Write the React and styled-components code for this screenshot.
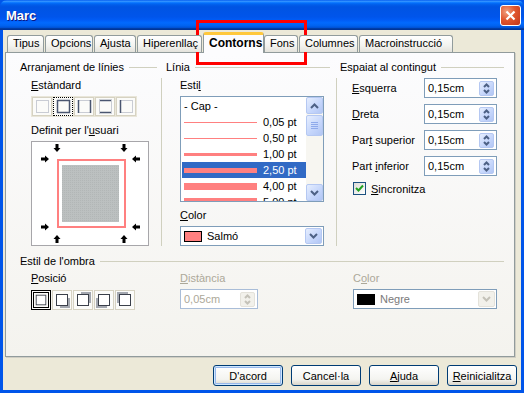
import React from "react";
import styled, { createGlobalStyle } from "styled-components";

const GlobalStyle = createGlobalStyle`
  body {
    margin: 0;
    font-family: "Liberation Sans", Arial, sans-serif;
    font-size: 11px;
    color: #000;
  }
`;

const tabs = [
  { name: "Tipus", w: 37 },
  { name: "Opcions", w: 48 },
  { name: "Ajusta", w: 42 },
  { name: "Hiperenllaç", w: 65 },
  { name: "Contorns", w: 61, active: true },
  { name: "Fons", w: 34 },
  { name: "Columnes", w: 59 },
  { name: "Macroinstrucció", w: 94 },
];

const styles = [
  { text: "- Cap -" },
  { text: "0,05 pt", h: 1 },
  { text: "0,50 pt", h: 1 },
  { text: "1,00 pt", h: 3 },
  { text: "2,50 pt", h: 5, selected: true },
  { text: "4,00 pt", h: 7 },
  { text: "5,00 pt", h: 8 },
];

const presets = [
  { l: 0, r: 0, t: 0, b: 0 },
  { l: 1, r: 1, t: 1, b: 1, focus: true },
  { l: 1, r: 1, t: 0, b: 0 },
  { l: 0, r: 0, t: 1, b: 1 },
  { l: 1, r: 0, t: 0, b: 0 },
];

const shadows = [null, [3, 3], [3, -3], [-3, 3], [-3, -3]];

const spacing = [
  { pre: "", u: "E", post: "squerra" },
  { pre: "", u: "D", post: "reta" },
  { pre: "Par", u: "t", post: " superior" },
  { pre: "Part ", u: "i", post: "nferior" },
];

export default function App() {
  return (
    <>
      <GlobalStyle />
      <Window>
        <TitleBar>
          <Title>Marc</Title>
          <CloseButton>
            <svg width="11" height="11" viewBox="0 0 11 11">
              <path d="M1.5 1.5 L9.5 9.5 M9.5 1.5 L1.5 9.5" stroke="#fff" strokeWidth="2.2" />
            </svg>
          </CloseButton>
        </TitleBar>
        <Body>
          <TabRow>
            {tabs.map((t) => (
              <Tab key={t.name} $w={t.w} $active={t.active}>
                {t.name}
              </Tab>
            ))}
          </TabRow>
          <Panel>
            <TopArea>
              <Group $w={137}>
                <GroupHead>
                  Arranjament de línies<HeadLine />
                </GroupHead>
                <GroupBody $indent={11}>
                  <Label $top={5}>
                    <u>E</u>stàndard
                  </Label>
                  <ValueSet>
                    {presets.map((p, i) => (
                      <PresetItem key={i} $focus={p.focus}>
                        <PresetIcon {...p} />
                      </PresetItem>
                    ))}
                  </ValueSet>
                  <Label $top={7}>
                    Definit per l'<u>u</u>suari
                  </Label>
                  <UserBox>
                    <UserPreview />
                  </UserBox>
                </GroupBody>
              </Group>
              <Separator $left={4} $right={4} />
              <Group $w={164}>
                <GroupHead>
                  Línia<HeadLine />
                </GroupHead>
                <GroupBody $indent={14}>
                  <Label $top={5}>
                    Esti<u>l</u>
                  </Label>
                  <ListBox>
                    <ListItems>
                      {styles.map((s) => (
                        <ListRow key={s.text} $selected={s.selected}>
                          {s.h ? (
                            <>
                              <LineCell>
                                <Stroke $h={s.h} />
                              </LineCell>
                              {s.text}
                            </>
                          ) : (
                            s.text
                          )}
                        </ListRow>
                      ))}
                    </ListItems>
                    <Scrollbar>
                      <ScrollButton>
                        <Chevron dir="up" />
                      </ScrollButton>
                      <Thumb>
                        <Grip />
                        <Grip />
                        <Grip />
                        <Grip />
                      </Thumb>
                      <ScrollSpace />
                      <ScrollButton>
                        <Chevron dir="down" />
                      </ScrollButton>
                    </Scrollbar>
                  </ListBox>
                  <Label $top={7}>
                    <u>C</u>olor
                  </Label>
                  <Dropdown $w={144} $top={4}>
                    <Swatch $color="#FF8080" />
                    <DropText>Salmó</DropText>
                    <DropButton>
                      <Chevron dir="down" />
                    </DropButton>
                  </Dropdown>
                </GroupBody>
              </Group>
              <Separator $left={6} $right={3} />
              <Group $w={164}>
                <GroupHead>
                  Espaiat al contingut<HeadLine />
                </GroupHead>
                <GroupBody $indent={12}>
                  <SpacingList>
                    {spacing.map((s) => (
                      <SpacingRow key={s.post}>
                        <RowLabel>
                          {s.pre}
                          <u>{s.u}</u>
                          {s.post}
                        </RowLabel>
                        <SpinField $w={73}>
                          <FieldText>0,15cm</FieldText>
                          <SpinButton>
                            <Chevron dir="up" small />
                            <Chevron dir="down" small />
                          </SpinButton>
                        </SpinField>
                      </SpacingRow>
                    ))}
                  </SpacingList>
                  <CheckRow>
                    <CheckBox>
                      <svg width="11" height="11" viewBox="0 0 11 11">
                        <path d="M2 5 L4.5 7.5 L9 2.5" fill="none" stroke="#21A121" strokeWidth="2" />
                      </svg>
                    </CheckBox>
                    <span>
                      <u>S</u>incronitza
                    </span>
                  </CheckRow>
                </GroupBody>
              </Group>
            </TopArea>

            <ShadowSection>
              <GroupHead>
                Estil de l'ombra<HeadLine />
              </GroupHead>
              <ShadowGrid>
                <div>
                  <Label $top={4}>
                    <u>P</u>osició
                  </Label>
                  <ShadowSet>
                    {shadows.map((off, i) => (
                      <ShadowItem key={i} $selected={i === 0}>
                        <ShadowIcon off={off} />
                      </ShadowItem>
                    ))}
                  </ShadowSet>
                </div>
                <div>
                  <Label $top={4} $disabled>
                    <u>D</u>istància
                  </Label>
                  <SpinField $w={78} $top={4} $disabled>
                    <FieldText $disabled>0,05cm</FieldText>
                    <SpinButton $disabled>
                      <Chevron dir="up" small color="#C4C2B8" />
                      <Chevron dir="down" small color="#C4C2B8" />
                    </SpinButton>
                  </SpinField>
                </div>
                <div>
                  <Label $top={4} $disabled>
                    C<u>o</u>lor
                  </Label>
                  <Dropdown $w={144} $top={4}>
                    <Swatch $color="#000" $w={18} />
                    <DropText $disabled>Negre</DropText>
                    <DropButton $disabled>
                      <Chevron dir="down" color="#C4C2B8" />
                    </DropButton>
                  </Dropdown>
                </div>
              </ShadowGrid>
            </ShadowSection>
          </Panel>
          <ButtonRow>
            <Button $default>D'acord</Button>
            <Button>Cancel·la</Button>
            <Button>
              <u>A</u>juda
            </Button>
            <Button>
              <u>R</u>einicialitza
            </Button>
          </ButtonRow>
        </Body>
        <Highlight />
      </Window>
    </>
  );
}

function Chevron({ dir, small, color = "#4D6185" }) {
  const w = small ? 7 : 9;
  const h = small ? 5 : 6;
  const pts =
    dir === "down"
      ? `1,1 ${w / 2},${h - 1.5} ${w - 1},1`
      : `1,${h - 1} ${w / 2},1.5 ${w - 1},${h - 1}`;
  return (
    <svg width={w} height={h} viewBox={`0 0 ${w} ${h}`}>
      <polyline points={pts} fill="none" stroke={color} strokeWidth="2" />
    </svg>
  );
}

function PresetIcon({ l, r, t, b }) {
  const dark = "#4A5670";
  const light = "#C9CCD4";
  return (
    <svg width="17" height="17" viewBox="0 0 17 17">
      <line x1="2" y1="2.5" x2="15" y2="2.5" stroke={t ? dark : light} strokeWidth={t ? 1.5 : 1} />
      <line x1="2" y1="14.5" x2="15" y2="14.5" stroke={b ? dark : light} strokeWidth={b ? 1.5 : 1} />
      <line x1="2.5" y1="2" x2="2.5" y2="15" stroke={l ? dark : light} strokeWidth={l ? 1.5 : 1} />
      <line x1="14.5" y1="2" x2="14.5" y2="15" stroke={r ? dark : light} strokeWidth={r ? 1.5 : 1} />
    </svg>
  );
}

function ShadowIcon({ off }) {
  return (
    <svg width="16" height="16" viewBox="0 0 16 16">
      {off && <rect x={3 + off[0]} y={3 + off[1]} width="11" height="11" fill="#A4A8B0" />}
      <rect x="2.5" y="2.5" width="11" height="11" fill="#fff" stroke="#3A3F4A" />
    </svg>
  );
}

function Arrow({ x, y, rot }) {
  return (
    <polygon
      points="-1.5,-4 1.5,-4 1.5,0 3.5,0 0,4 -3.5,0 -1.5,0"
      fill="#000"
      transform={`translate(${x} ${y}) rotate(${rot})`}
    />
  );
}

function UserPreview() {
  return (
    <svg width="116" height="103" viewBox="0 0 116 103">
      <defs>
        <pattern id="hatch" width="2" height="2" patternUnits="userSpaceOnUse">
          <rect width="2" height="2" fill="#BCC0C0" />
          <rect width="1" height="1" fill="#B2B6B6" />
        </pattern>
      </defs>
      <Arrow x={25} y={6} rot={0} />
      <Arrow x={92} y={6} rot={0} />
      <Arrow x={13} y={17} rot={-90} />
      <Arrow x={104} y={17} rot={90} />
      <Arrow x={13} y={85} rot={-90} />
      <Arrow x={104} y={85} rot={90} />
      <Arrow x={25} y={97} rot={180} />
      <Arrow x={92} y={97} rot={180} />
      <rect x="26" y="18" width="67" height="67" fill="#fff" stroke="#FF8080" strokeWidth="2" />
      <rect x="30" y="23" width="57" height="57" fill="url(#hatch)" />
    </svg>
  );
}

const Window = styled.div`
  position: relative;
  width: 524px;
  height: 393px;
  display: flex;
  flex-direction: column;
  overflow: hidden;
  background: #0055ea;
`;

const TitleBar = styled.div`
  height: 30px;
  flex-shrink: 0;
  box-sizing: border-box;
  padding: 0 3px 0 6px;
  display: flex;
  align-items: center;
  justify-content: space-between;
  border-radius: 7px 7px 0 0;
  background: linear-gradient(
    to bottom,
    #0058ee 0%,
    #3593ff 4%,
    #288eff 6%,
    #127dff 8%,
    #036ffc 10%,
    #0262ee 14%,
    #0057e5 20%,
    #0054e3 24%,
    #0055eb 56%,
    #005bf5 66%,
    #026afe 76%,
    #0062ef 86%,
    #0052d6 92%,
    #0040ab 94%,
    #003092 100%
  );
`;

const Title = styled.div`
  color: #fff;
  font-weight: bold;
  font-size: 13px;
  text-shadow: 1px 1px 0 #0a1883;
`;

const CloseButton = styled.div`
  width: 21px;
  height: 21px;
  box-sizing: border-box;
  border: 1px solid #fff;
  border-radius: 3px;
  display: flex;
  align-items: center;
  justify-content: center;
  background: radial-gradient(circle at 30% 30%, #f0a080, #e0562e 45%, #c2351a);
`;

const Body = styled.div`
  flex: 1;
  display: flex;
  flex-direction: column;
  background: #ece9d8;
  border: 3px solid #0055ea;
  border-top: none;
  padding: 2px 4px 0 2px;
`;

const TabRow = styled.div`
  display: flex;
  align-items: flex-end;
  gap: 1px;
  height: 21px;
  padding-left: 2px;
  margin-bottom: -1px;
  position: relative;
  z-index: 1;
`;

const Tab = styled.div`
  width: ${(p) => p.$w}px;
  height: ${(p) => (p.$active ? 21 : 17)}px;
  margin-bottom: ${(p) => (p.$active ? 0 : 1)}px;
  margin-right: ${(p) => (p.$active ? -1 : 0)}px;
  box-sizing: border-box;
  border: 1px solid #919b9c;
  border-bottom: none;
  border-top: ${(p) => (p.$active ? "3px solid #ffc83c" : "1px solid #919b9c")};
  border-radius: 3px 3px 0 0;
  background: ${(p) =>
    p.$active ? "#fcfcfe" : "linear-gradient(#ffffff, #f3f3ef 60%, #e4e3dc)"};
  font-weight: ${(p) => (p.$active ? "bold" : "normal")};
  font-size: ${(p) => (p.$active ? "12px" : "11px")};
  line-height: ${(p) => (p.$active ? 16 : 15)}px;
  padding-left: 5px;
  white-space: nowrap;
  overflow: hidden;
`;

const Panel = styled.div`
  width: 510px;
  height: 305px;
  box-sizing: border-box;
  border: 1px solid #919b9c;
  box-shadow: 1px 1px 0 #d0cec4;
  background: linear-gradient(#fcfcfe, #f4f3ee);
  padding: 8px 10px 0 14px;
`;

const TopArea = styled.div`
  display: flex;
`;

const Group = styled.div`
  width: ${(p) => p.$w}px;
  display: flex;
  flex-direction: column;
`;

const GroupHead = styled.div`
  height: 13px;
  line-height: 13px;
  display: flex;
  align-items: center;
  white-space: nowrap;
`;

const HeadLine = styled.div`
  flex: 1;
  height: 1px;
  margin-left: 5px;
  background: #d0d0bf;
`;

const GroupBody = styled.div`
  display: flex;
  flex-direction: column;
  align-items: flex-start;
  padding-left: ${(p) => p.$indent}px;
`;

const Separator = styled.div`
  width: 1px;
  margin: 17px ${(p) => p.$right}px 0 ${(p) => p.$left}px;
  background: #d0d0bf;
`;

const Label = styled.div`
  height: 13px;
  line-height: 13px;
  margin-top: ${(p) => p.$top}px;
  color: ${(p) => (p.$disabled ? "#aca899" : "#000")};
  white-space: nowrap;
`;

const ValueSet = styled.div`
  display: flex;
  gap: 1px;
  margin-top: 4px;
  padding: 1px;
  background: #e9e6d9;
`;

const PresetItem = styled.div`
  width: 20px;
  height: 19px;
  box-sizing: border-box;
  border: 1px ${(p) => (p.$focus ? "dotted #000" : "solid #d6d2c2")};
  background: #fbfbf9;
  display: flex;
  align-items: center;
  justify-content: center;
`;

const UserBox = styled.div`
  margin-top: 4px;
  width: 118px;
  height: 105px;
  box-sizing: border-box;
  border: 1px solid #a7a6aa;
  background: #fff;
  display: flex;
`;

const ListBox = styled.div`
  margin-top: 4px;
  width: 144px;
  height: 106px;
  box-sizing: border-box;
  border: 1px solid #7f9db9;
  background: #fff;
  display: flex;
`;

const ListItems = styled.div`
  flex: 1;
  padding-top: 1px;
  overflow: hidden;
`;

const ListRow = styled.div`
  height: 16px;
  display: flex;
  align-items: center;
  padding-left: 2px;
  margin-left: 1px;
  white-space: nowrap;
  background: ${(p) => (p.$selected ? "#316ac5" : "transparent")};
  color: ${(p) => (p.$selected ? "#fff" : "#000")};
`;

const LineCell = styled.div`
  width: 73px;
  margin-right: 6px;
  display: flex;
  align-items: center;
`;

const Stroke = styled.div`
  width: 100%;
  height: ${(p) => p.$h}px;
  background: #ff8080;
`;

const Scrollbar = styled.div`
  width: 17px;
  display: flex;
  flex-direction: column;
  background: #f7f6f1;
`;

const xpButton = `
  box-sizing: border-box;
  border: 1px solid #b5c8f2;
  border-radius: 2px;
  background: linear-gradient(135deg, #e6eefe, #c4d5fb 60%, #b2c6f4);
  display: flex;
  align-items: center;
  justify-content: center;
`;

const ScrollButton = styled.div`
  ${xpButton}
  height: 17px;
`;

const Thumb = styled.div`
  ${xpButton}
  flex-direction: column;
  gap: 1px;
  height: 21px;
  margin-top: 1px;
`;

const Grip = styled.div`
  width: 7px;
  height: 1px;
  background: #8faaeb;
`;

const ScrollSpace = styled.div`
  flex: 1;
`;

const Dropdown = styled.div`
  margin-top: ${(p) => p.$top}px;
  width: ${(p) => p.$w}px;
  height: 20px;
  box-sizing: border-box;
  border: 1px solid #7f9db9;
  background: #fff;
  display: flex;
  align-items: center;
  padding: 0 1px 0 3px;
`;

const Swatch = styled.div`
  width: ${(p) => p.$w || 18}px;
  height: 11px;
  box-sizing: border-box;
  border: 1px solid #000;
  background: ${(p) => p.$color};
`;

const DropText = styled.div`
  flex: 1;
  margin-left: 5px;
  color: ${(p) => (p.$disabled ? "#7a7a7a" : "#000")};
`;

const DropButton = styled.div`
  ${xpButton}
  width: 17px;
  height: 16px;
  ${(p) => p.$disabled && "background: #f2f1eb; border-color: #e4e2da;"}
`;

const SpacingList = styled.div`
  display: flex;
  flex-direction: column;
  gap: 6px;
  margin-top: 4px;
`;

const SpacingRow = styled.div`
  display: flex;
  align-items: center;
`;

const RowLabel = styled.div`
  width: 72px;
  white-space: nowrap;
`;

const SpinField = styled.div`
  margin-top: ${(p) => p.$top || 0}px;
  width: ${(p) => p.$w}px;
  height: 20px;
  box-sizing: border-box;
  border: 1px solid ${(p) => (p.$disabled ? "#a9bdd8" : "#7f9db9")};
  background: #fff;
  display: flex;
  align-items: center;
  padding: 0 2px 0 3px;
`;

const FieldText = styled.div`
  flex: 1;
  color: ${(p) => (p.$disabled ? "#aca899" : "#000")};
`;

const SpinButton = styled.div`
  ${xpButton}
  flex-direction: column;
  gap: 1px;
  width: 15px;
  height: 15px;
  ${(p) => p.$disabled && "background: #f2f1eb; border-color: #e4e2da;"}
`;

const CheckRow = styled.div`
  margin-top: 6px;
  margin-left: 1px;
  display: flex;
  align-items: center;
  gap: 5px;
`;

const CheckBox = styled.div`
  width: 13px;
  height: 13px;
  box-sizing: border-box;
  border: 1px solid #1c5180;
  background: linear-gradient(135deg, #dcdcd7, #fff);
  display: flex;
  align-items: center;
  justify-content: center;
`;

const ShadowSection = styled.div`
  margin-top: 9px;
`;

const ShadowGrid = styled.div`
  display: grid;
  grid-template-columns: 149px 173px 1fr;
  padding-left: 11px;
`;

const ShadowSet = styled.div`
  display: flex;
  gap: 1px;
  margin-top: 5px;
`;

const ShadowItem = styled.div`
  width: 20px;
  height: 20px;
  box-sizing: border-box;
  border: ${(p) => (p.$selected ? "3px double #000" : "1px solid #d6d2c2")};
  background: #fbfbf9;
  display: flex;
  align-items: center;
  justify-content: center;
`;

const ButtonRow = styled.div`
  display: flex;
  justify-content: flex-end;
  gap: 8px;
  margin-top: 8px;
`;

const Button = styled.div`
  width: 70px;
  height: 21px;
  box-sizing: border-box;
  border: 1px solid #003c74;
  border-radius: 3px;
  background: linear-gradient(#ffffff, #f4f4f0 70%, #d9d5ca);
  display: flex;
  align-items: center;
  justify-content: center;
  box-shadow: ${(p) => (p.$default ? "inset 0 0 0 1px #cee7ff, inset 0 0 0 2px #98b8ea" : "none")};
`;

const Highlight = styled.div`
  position: absolute;
  left: 196px;
  top: 20px;
  width: 111px;
  height: 45px;
  box-sizing: border-box;
  border: 3px solid #ff0000;
  pointer-events: none;
`;
